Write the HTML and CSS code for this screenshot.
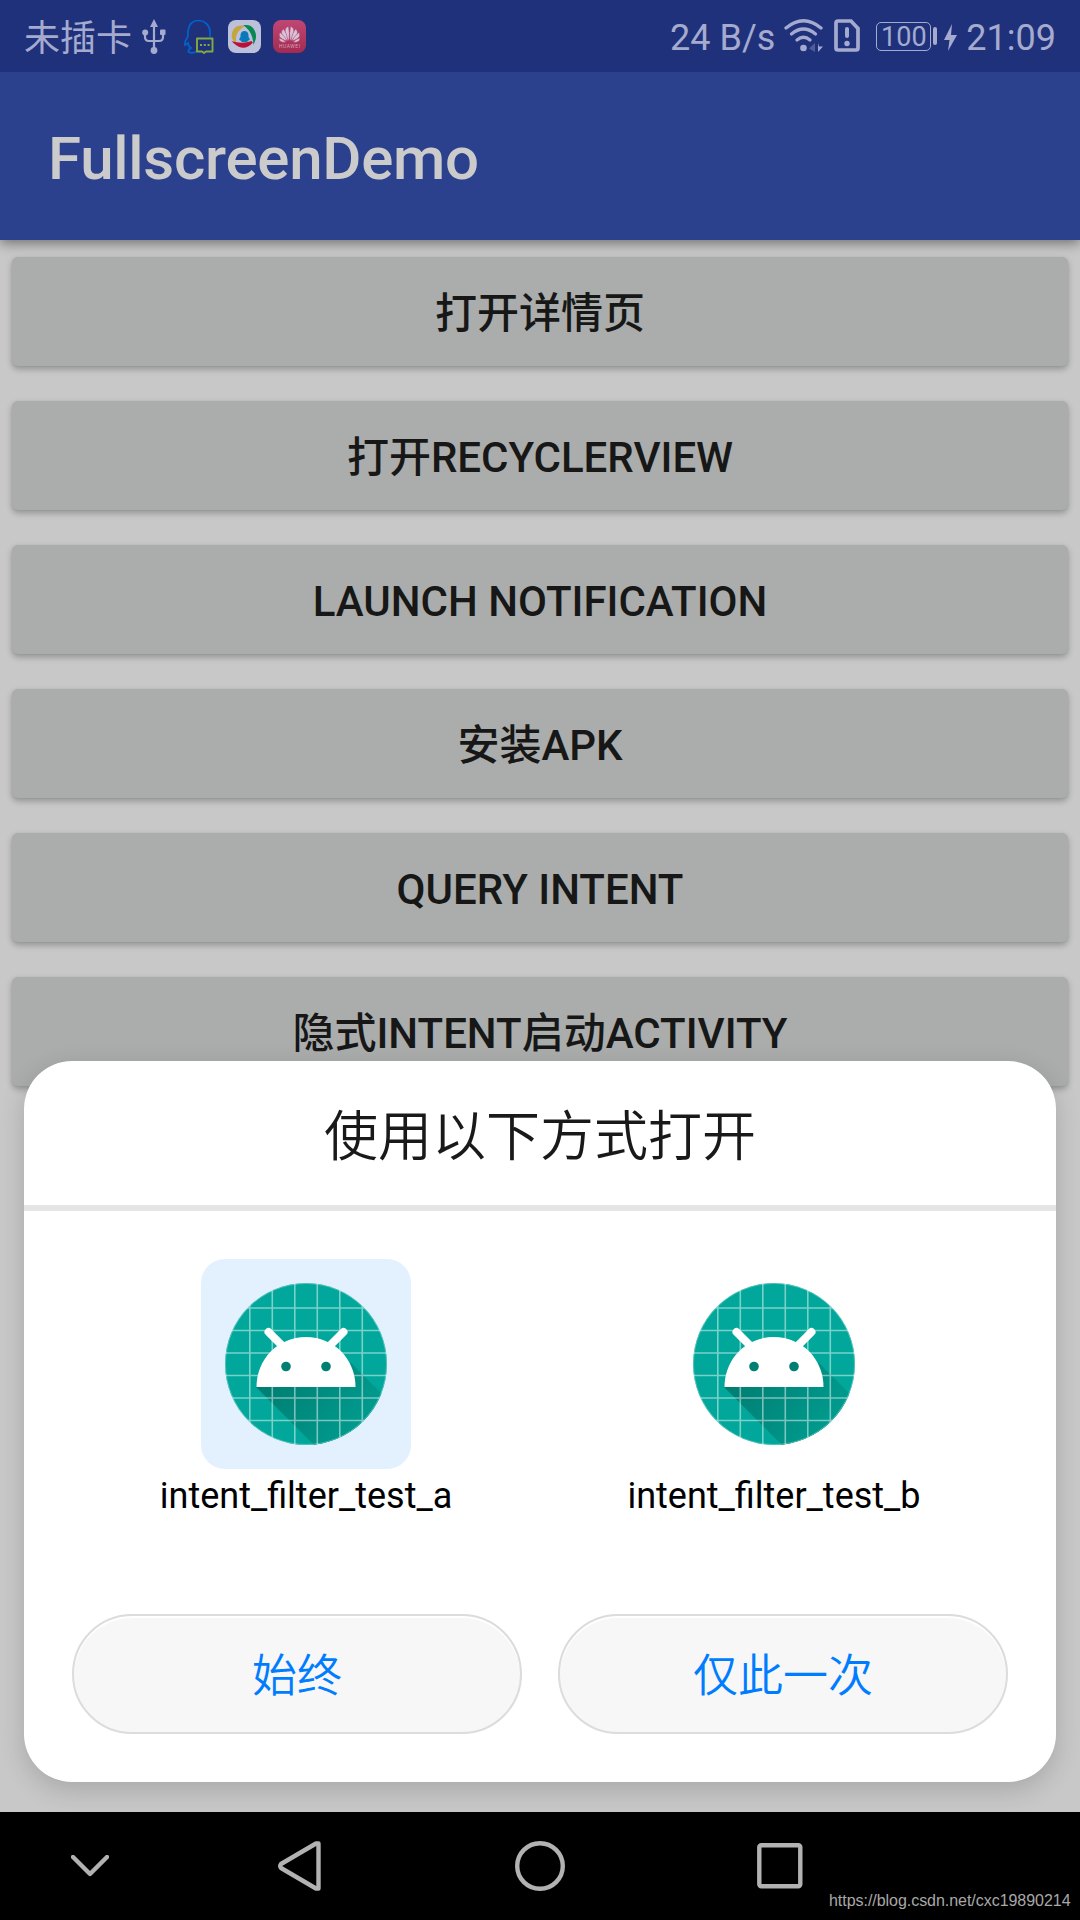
FILE: index.html
```html
<!DOCTYPE html>
<html lang="zh-CN">
  <head>
    <meta charset="utf-8" />
    <title>FullscreenDemo</title>
    <link rel="stylesheet" href="styles.css">
  </head>

  <body>
    <div id="screen">
      <!-- status bar -->
      <div class="status-bar">
        <span class="carrier">未插卡</span>
        <svg class="icon-usb" width="24" height="36" viewBox="0 0 24 36">
          <path d="M12 6V30M3 13V18Q3 22 7 22H17Q21 22 21 18V13" fill="none" stroke="#a5abcf" stroke-width="2.2"/>
          <path d="M12 0L16 8H8Z" fill="#a5abcf"/>
          <circle cx="12" cy="31.500" r="3.400" fill="#a5abcf"/>
          <circle cx="3.200" cy="13.500" r="3" fill="#a5abcf"/>
          <rect x="18" y="10.500" width="5.500" height="5.500" rx="1" fill="#a5abcf"/>
        </svg>
        <svg class="icon-qq" width="31" height="36" viewBox="0 0 31 36">
          <path d="M26 18V12C25 5 20 1.500 14.500 1.500S5 5 4 12V16Q4 18 2.500 20Q0.500 23 1 26L4 24Q4 27 7 29Q3.500 31 4.500 33Q8 35 13 32.500" fill="none" stroke="#0063cf" stroke-width="1.700"/>
          <path d="M13 19.500H28.500V32.500H22L20 34L18 32.500H13Z" fill="#20317b" stroke="#82aa41" stroke-width="1.900" stroke-linejoin="round"/>
          <path d="M16 26H18M19.800 26H21.800M23.600 26H25.600" stroke="#82aa41" stroke-width="2"/>
        </svg>
        <svg class="icon-app" width="33" height="33" viewBox="0 0 33 33">
          <rect width="33" height="33" rx="8" fill="#bcc0db"/>
          <path d="M14.500 6.500C4 6 3 17 7 21Q6 12 14.500 6.500Z" fill="#c4a63c" stroke="#c4a63c" stroke-width="2"/>
          <path d="M18 6C25 6 29 14 26 21Q25 12 18 6Z" fill="#078954" stroke="#078954" stroke-width="2"/>
          <path d="M7 23Q16 25 24 22Q16 31 7 23Z" fill="#b81238" stroke="#b81238" stroke-width="2"/>
          <path d="M12.500 17V15Q13 11 16.500 11T20.500 15V17Q23 20 20.500 20.500L19 22H14L12.500 20.500Q10 20 12.500 17Z" fill="#087ab9"/>
        </svg>
        <svg class="icon-huawei" width="33" height="33" viewBox="0 0 33 33">
          <defs>
            <linearGradient id="hw" x1="0" y1="0" x2="0" y2="1">
              <stop offset="0" stop-color="#bf4774"/><stop offset="1" stop-color="#a32b50"/>
            </linearGradient>
          </defs>
          <rect width="33" height="33" rx="8" fill="url(#hw)"/>
          <g fill="#d7c2d8" stroke="#b03c65" stroke-width=".5">
            <path d="M16 21C11 14 11 7 15.500 6.500Q17 13 16 21ZM17 21C22 14 22 7 17.500 6.500Q16 13 17 21Z"/>
            <path d="M15 21C8 16 7 11 10.500 9Q14 13 15 21ZM18 21C25 16 26 11 22.500 9Q19 13 18 21Z"/>
            <path d="M14 21C7 19 5 16 7 12.500Q12 16 14 21ZM19 21C26 19 28 16 26 12.500Q21 16 19 21Z"/>
            <path d="M13 22C8 23 6 20.500 6 18Q10 19 13 22ZM20 22C25 23 27 20.500 27 18Q23 19 20 22Z"/>
          </g>
          <text x="16.500" y="27.800" text-anchor="middle" textLength="21" class="huawei-text">HUAWEI</text>
        </svg>

        <div class="status-right">
          <span class="speed">24 B/s</span>
          <svg class="icon-wifi" width="40" height="34" viewBox="0 0 40 34">
            <g fill="none" stroke="#a5abcf" stroke-width="3.300" stroke-linecap="round">
              <path d="M2 9Q19.500-5.500 37 9"/>
              <path d="M7.500 15Q19.500 5 31.500 15"/>
              <path d="M13 21Q19.500 15.500 26 21"/>
            </g>
            <circle cx="19.500" cy="29" r="3.300" fill="#a5abcf"/>
            <path d="M31 24V33L25 29.500Z" fill="#525d98"/>
            <path d="M34 24V33L39 27.500H35Z" fill="#a5abcf"/>
          </svg>
          <svg class="icon-sim" width="26" height="33" viewBox="0 0 26 33">
            <path d="M4 2H17L24 9.500V29Q24 31 22 31H4Q2 31 2 29V4Q2 2 4 2Z" fill="none" stroke="#a5abcf" stroke-width="3.700"/>
            <path d="M13 10V17" stroke="#a5abcf" stroke-width="4" stroke-linecap="round"/>
            <circle cx="13" cy="24.500" r="2.700" fill="#a5abcf"/>
          </svg>
          <div class="battery"><span>100</span></div>
          <div class="battery-tip"></div>
          <svg class="icon-bolt" width="13" height="27" viewBox="0 0 13 27">
            <path d="M8 0L0 16H5.500L4 27L13 11H7Z" fill="#a5abcf"/>
          </svg>
          <span class="clock">21:09</span>
        </div>
      </div>

      <div class="toolbar">FullscreenDemo</div>

      <!-- activity buttons -->
      <div class="content">
        <button type="button">打开详情页</button>
        <button type="button">打开RECYCLERVIEW</button>
        <button type="button">LAUNCH NOTIFICATION</button>
        <button type="button">安装APK</button>
        <button type="button">QUERY INTENT</button>
        <button type="button">隐式INTENT启动ACTIVITY</button>
      </div>

      <!-- intent chooser -->
      <div class="chooser">
        <div class="chooser-title">使用以下方式打开</div>
        <div class="apps">
          <div class="app">
            <div class="app-icon selected">
              <svg width="162" height="162" viewBox="0 0 162 162">
                <defs>
                  <clipPath id="round"><circle cx="81" cy="81" r="81"/></clipPath>
                  <linearGradient id="shade" gradientUnits="userSpaceOnUse" x1="45" y1="85" x2="130" y2="150">
                    <stop offset="0" stop-color="#007c70"/><stop offset="1" stop-color="#009b8e"/>
                  </linearGradient>
                </defs>
                <g id="robot" clip-path="url(#round)">
                  <rect width="162" height="162" fill="#00a79a"/>
                  <path d="M31 104L125 79L180 134V250H177Z" fill="url(#shade)"/>
                  <path d="M24.800 0V162M47.300 0V162M69.800 0V162M92.300 0V162M114.800 0V162M137.300 0V162M0 25H162M0 47.500H162M0 70H162M0 92.500H162M0 115H162M0 137.500H162" stroke="#fff" stroke-opacity=".48" stroke-width="1.600"/>
                  <circle cx="81" cy="81" r="80.500" fill="none" stroke="#fff" stroke-opacity=".3"/>
                  <path d="M31.500 104C31.500 76 53 54 81 54S130.500 76 130.500 104Z" fill="#fff"/>
                  <path d="M43.500 49L57 62.500M118.500 49L105 62.500" stroke="#fff" stroke-width="8" stroke-linecap="round"/>
                  <circle cx="61" cy="83.500" r="4.800" fill="#007f73"/>
                  <circle cx="101" cy="83.500" r="4.800" fill="#007f73"/>
                </g>
              </svg>
            </div>
            <div class="app-name">intent_filter_test_a</div>
          </div>
          <div class="app">
            <div class="app-icon">
              <svg width="162" height="162" viewBox="0 0 162 162"><use href="#robot"/></svg>
            </div>
            <div class="app-name">intent_filter_test_b</div>
          </div>
        </div>
        <div class="actions">
          <button type="button">始终</button>
          <button type="button">仅此一次</button>
        </div>
      </div>

      <!-- navigation bar -->
      <div class="nav-bar">
        <svg class="nav-down" width="38" height="22" viewBox="0 0 38 22"><path d="M2 2L19 19L36 2"/></svg>
        <svg class="nav-back" width="43" height="50" viewBox="0 0 43 50"><path d="M39.500 2.500H38L3 23Q1.500 25 3 27L38 47.500H40.500V2.500Z"/></svg>
        <svg class="nav-home" width="50" height="50" viewBox="0 0 50 50"><circle cx="25" cy="25" r="22.800"/></svg>
        <svg class="nav-recent" width="46" height="46" viewBox="0 0 46 46"><rect x="2.300" y="2.300" width="41" height="41" rx="2"/></svg>
        <span class="watermark">https://blog.csdn.net/cxc19890214</span>
      </div>
    </div>
  </body>
</html>
```

FILE: styles.css
```css
body {
  margin: 0;
  background-color: #c8c8c8;
  font-family: Roboto, 'Noto Sans CJK SC', sans-serif;
}

svg {
  display: block;
  flex: none;
}

button {
  border: none;
  padding: 0;
  font-family: inherit;
}

#screen {
  position: relative;
  width: 1080px;
  height: 1920px;
  overflow: hidden;
  display: flex;
  flex-direction: column;
}

/* status bar */
.status-bar {
  position: relative;
  z-index: 1; /* keeps the toolbar shadow off the bar */
  box-sizing: border-box;
  height: 72px;
  flex: none;
  padding: 19px 24px 0 24px;
  display: flex;
  align-items: flex-start;
  background-color: #20317b;
  color: #a5abcf;
  font-size: 36px;
  line-height: 36px;
}

.carrier {
  font-weight: 400;
  line-height: 40px;
}

.icon-usb {
  margin-left: 10px;
}

.icon-qq {
  margin-left: 18px;
}

.icon-app {
  margin: 1px 0 0 13px;
}

.icon-huawei {
  margin: 1px 0 0 12px;
}

.huawei-text {
  font-size: 5px;
  fill: #d7a2be;
}

.status-right {
  display: flex;
  margin-left: auto;
}

.speed,
.clock {
  line-height: 38px;
}

.icon-wifi {
  margin-left: 9px;
}

.icon-sim {
  margin-left: 10px;
}

.battery {
  box-sizing: border-box;
  width: 55px;
  height: 29px;
  margin: 3px 0 0 16px;
  border: 1.5px solid #a5abcf;
  border-radius: 5px;
  font-size: 27px;
  line-height: 28px;
  text-align: center;
}

.battery-tip {
  width: 4px;
  height: 18px;
  margin: 8px 0 0 2px;
  border-radius: 2px;
  background-color: #a5abcf;
}

.icon-bolt {
  margin: 5px 9px 0 7px;
}

.toolbar {
  position: relative;
  height: 168px;
  flex: none;
  padding-left: 48px;
  background-color: #2c418d;
  box-shadow: 0 3px 12px rgba(0, 0, 0, 0.45);
  color: #cbcbcb;
  font-size: 60px;
  font-weight: 500;
  letter-spacing: -0.26px;
  line-height: 174px;
}

/* activity buttons */
.content {
  display: flex;
  flex-direction: column;
  gap: 35px;
  padding: 17px 12px 0;
}

.content button {
  height: 109px;
  flex: none;
  border-radius: 6px;
  background-color: #aaadab;
  box-shadow: 0 3px 6px rgba(0, 0, 0, 0.28), 0 0 2px rgba(0, 0, 0, 0.06);
  color: #171717;
  font-size: 42px;
  font-weight: 500;
  line-height: 109px;
  padding-top: 2px;
}

/* the chooser lies over the activity */
.chooser {
  position: absolute;
  left: 24px;
  right: 24px;
  bottom: 138px;
  height: 721px;
  border-radius: 48px;
  background-color: #fff;
  box-shadow: 0 8px 26px rgba(0, 0, 0, 0.16);
}

.chooser-title {
  height: 144px;
  border-bottom: 6px solid #e5e5e5;
  color: #191919;
  font-size: 54px;
  font-weight: 350;
  line-height: 153px;
  text-align: center;
}

.apps {
  display: flex;
  height: 403px;
  padding: 48px 48px 0;
  box-sizing: border-box;
}

.app {
  width: 468px;
  display: flex;
  flex-direction: column;
  align-items: center;
}

.app-icon {
  padding: 24px;
  border-radius: 24px;
}

.selected {
  background-color: #e3f1ff;
}

.app-name {
  margin-top: 5px;
  color: #000;
  font-size: 36px;
  line-height: 45px;
}

.actions {
  display: flex;
  gap: 36px;
  padding: 0 48px;
}

.actions button {
  flex: 1;
  height: 120px;
  padding-top: 5px;
  border: 2px solid #dcdcdc;
  border-radius: 60px;
  background-color: #f7f7f7;
  box-shadow: inset 0 2px 1px #fff;
  color: #007dff;
  font-size: 45px;
  font-weight: 350;
  line-height: 111px;
}

/* navigation bar */
.nav-bar {
  display: flex;
  align-items: center;
  height: 108px;
  flex: none;
  margin-top: auto;
  background-color: #000;
}

.nav-bar svg {
  fill: none;
  stroke: #b2b2b2;
  stroke-width: 4.4;
  stroke-linecap: round;
  stroke-linejoin: round;
}

.nav-down {
  margin-left: 71px;
}

.nav-back {
  margin-left: 169px;
}

.nav-home {
  margin-left: 194px;
}

.nav-recent {
  margin-left: 192px;
}

.watermark {
  align-self: flex-end;
  margin: 0 0 9px 26px;
  color: #a8a8a8;
  font-family: 'Liberation Sans', Arial, sans-serif;
  font-size: 16px;
  letter-spacing: -0.04px;
  line-height: 20px;
}
```
